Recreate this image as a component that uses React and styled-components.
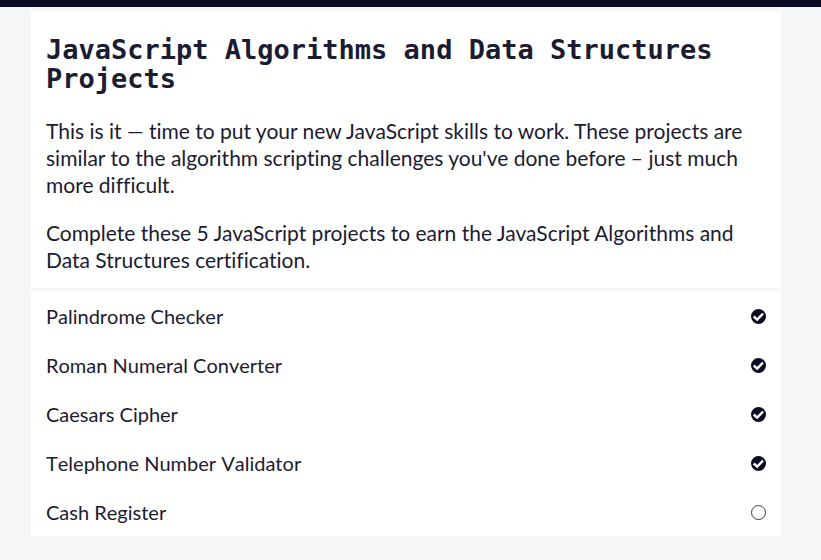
import React from 'react';
import styled, { createGlobalStyle } from 'styled-components';

const GlobalStyle = createGlobalStyle`
  *, *::before, *::after { box-sizing: border-box; }
  body {
    margin: 0;
    background: #f5f6f7;
    color: #1b1b32;
    font-family: Lato, sans-serif;
    font-size: 21px;
    font-variant-ligatures: none;
    line-height: 27px;
  }
`;

const TopBar = styled.header`
  height: 7px;
  background: #0a0a23;
`;

const Main = styled.main`
  display: flex;
  flex-direction: column;
  gap: 3px;
  padding: 4px 40px 24px 31px;
`;

const Intro = styled.section`
  padding: 24px 15px 15px;
  background: #fff;
`;

const Title = styled.h1`
  margin: 0 0 24px;
  font: 700 27px/29px "DejaVu Sans Mono", monospace;
`;

const Paragraph = styled.p`
  margin: 0;
  & + & { margin-top: 21px; }
`;

const ProjectList = styled.ul`
  margin: 0;
  padding: 0;
  list-style: none;
  background: #fff;
`;

const ProjectLink = styled.a`
  display: flex;
  align-items: center;
  justify-content: space-between;
  padding: 12px 15px 10px;
  color: inherit;
  font-size: 20px;
  font-kerning: none;
  text-decoration: none;
`;

const Icon = styled.svg`
  flex: none;
  width: 15px;
  height: 15px;
`;

const projects = [
  { name: 'Palindrome Checker', done: true },
  { name: 'Roman Numeral Converter', done: true },
  { name: 'Caesars Cipher', done: true },
  { name: 'Telephone Number Validator', done: true },
  { name: 'Cash Register', done: false },
];

function Status({ done }) {
  return (
    <Icon viewBox="0 0 15 15" role="img" aria-label={done ? 'Passed' : 'Not passed'}>
      {done ? (
        <>
          <circle cx="7.5" cy="7.5" r="7.5" fill="#0a0a23" />
          <path d="M2.7 7.5 6.2 10.7 12 4.7" fill="none" stroke="#fff" strokeWidth="2.4" />
        </>
      ) : (
        <circle cx="7.5" cy="7.5" r="7" fill="#fff" stroke="#0a0a23" strokeWidth="0.8" />
      )}
    </Icon>
  );
}

export default function App() {
  return (
    <>
      <GlobalStyle />
      <TopBar />
      <Main>
        <Intro>
          <Title>JavaScript Algorithms and Data Structures Projects</Title>
          <Paragraph>
            This is it — time to put your new JavaScript skills to work. These projects are similar
            to the algorithm scripting challenges you've done before – just much more difficult.
          </Paragraph>
          <Paragraph>
            Complete these 5 JavaScript projects to earn the JavaScript Algorithms and Data
            Structures certification.
          </Paragraph>
        </Intro>
        <ProjectList>
          {projects.map(({ name, done }) => (
            <li key={name}>
              <ProjectLink href="#">
                {name}
                <Status done={done} />
              </ProjectLink>
            </li>
          ))}
        </ProjectList>
      </Main>
    </>
  );
}
